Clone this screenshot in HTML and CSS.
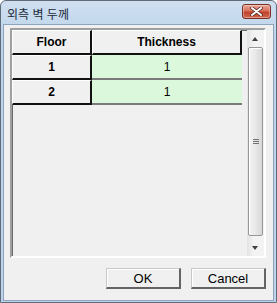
FILE: index.html
```html
<!DOCTYPE html>
<html lang="ko">
<head>
    <meta charset="UTF-8">
    <title>외측 벽 두께</title>
    <link rel="stylesheet" href="styles.css">
</head>
<body>
    <div class="window">
        <div class="titlebar">
            <span class="title">외측 벽 두께</span>
            <button class="close-btn" title="Close">
                <svg width="13" height="9" viewBox="0 0 13 9">
                    <path d="M2 1 L11 8 M11 1 L2 8" stroke="#4a2018" stroke-width="3.4" stroke-linecap="round"/>
                    <path d="M2 1 L11 8 M11 1 L2 8" stroke="#ffffff" stroke-width="2" stroke-linecap="round"/>
                </svg>
            </button>
        </div>

        <div class="client">
            <div class="grid">
                <div class="table">
                    <div class="row">
                        <div class="cell head floor">Floor</div>
                        <div class="cell head thick">Thickness</div>
                    </div>
                    <div class="row">
                        <div class="cell head floor">1</div>
                        <div class="cell value thick">1</div>
                    </div>
                    <div class="row">
                        <div class="cell head floor">2</div>
                        <div class="cell value thick">1</div>
                    </div>
                </div>

                <div class="scrollbar">
                    <div class="arrow up"></div>
                    <div class="track">
                        <div class="thumb"><span class="grip"></span></div>
                    </div>
                    <div class="arrow down"></div>
                </div>
            </div>

            <div class="buttons">
                <button class="button">OK</button>
                <button class="button">Cancel</button>
            </div>
        </div>
    </div>
</body>
</html>
```

FILE: styles.css
```css
html, body {
    margin: 0;
    padding: 0;
    background: #ffffff;
}
.window {
    width: 277px;
    height: 303px;
    box-sizing: border-box;
    border: 1px solid #5d6b7a;
    border-radius: 6px 6px 0 0;
    background: linear-gradient(#cfdff0, #bcd3ea 40px, #bcd3ea);
    display: flex;
    flex-direction: column;
    font-family: "Liberation Sans", Arial, sans-serif;
}
.titlebar {
    height: 23px;
    display: flex;
    align-items: flex-start;
    justify-content: space-between;
    padding: 0 5px 0 6px;
}
.title {
    font-family: "Noto Sans CJK KR", sans-serif;
    font-size: 12px;
    line-height: 14px;
    margin-top: 6px;
    color: #1b2a3a;
}
.close-btn {
    width: 29px;
    height: 15px;
    margin-top: 3px;
    padding: 0;
    border: 1px solid #7a2e22;
    border-radius: 3px;
    background: linear-gradient(#e9a898, #d8705c 45%, #c2412b 55%, #cd6a50);
    box-shadow: inset 0 0 0 1px rgba(255, 255, 255, 0.35);
    display: flex;
    align-items: center;
    justify-content: center;
}
.client {
    flex: 1;
    margin: 0 2px 1px 2px;
    border: 1px solid #8ea4bc;
    background: #f0f0f0;
    padding: 3px 7px 0 6px;
    display: flex;
    flex-direction: column;
}
.grid {
    height: 230px;
    box-sizing: border-box;
    border-style: solid;
    border-width: 2px;
    border-color: #a0a0a0 #ffffff #ffffff #a0a0a0;
    box-shadow: inset 1px 1px 0 #696969;
    background: #f0f0f0;
    display: flex;
}
.table {
    flex: 1;
    padding-top: 0;
}
.row {
    display: flex;
    height: 25px;
}
.cell {
    box-sizing: border-box;
    font-size: 12px;
    display: flex;
    align-items: center;
    justify-content: center;
    color: #000000;
}
.head {
    background: #f0f0f0;
    font-weight: bold;
    border-top: 1px solid #ffffff;
    border-left: 1px solid #ffffff;
    border-right: 2px solid #111111;
    border-bottom: 2px solid #111111;
}
.floor {
    width: 80px;
}
.thick {
    width: 150px;
}
.value {
    background: #dcf8dc;
    border-bottom: 2px solid #7a7a7a;
    padding-top: 1px;
}
.scrollbar {
    width: 17px;
    margin-left: 4px;
    display: flex;
    flex-direction: column;
    background: linear-gradient(90deg, #e3e3e3, #f3f3f3 40%, #f3f3f3);
}
.arrow {
    height: 17px;
    position: relative;
}
.arrow::after {
    content: "";
    position: absolute;
    left: 5px;
    border-left: 3.5px solid transparent;
    border-right: 3.5px solid transparent;
}
.arrow.up::after {
    top: 7px;
    border-bottom: 4px solid #404040;
}
.arrow.down::after {
    top: 7px;
    border-top: 4px solid #404040;
}
.track {
    flex: 1;
    padding: 0 1px;
    display: flex;
    flex-direction: column;
}
.thumb {
    margin-top: 0;
    height: 189px;
    box-sizing: border-box;
    border: 1px solid #979797;
    border-radius: 2px;
    background: linear-gradient(90deg, #f4f4f4, #e8e8e8 50%, #d8d8d8);
    box-shadow: inset 1px 1px 0 #ffffff;
    display: flex;
    align-items: center;
    justify-content: center;
}
.grip {
    width: 6px;
    height: 5px;
    background: repeating-linear-gradient(#707070 0 1px, transparent 1px 2px);
}
.buttons {
    display: flex;
    justify-content: flex-end;
    gap: 10px;
    margin-top: 10px;
}
.button {
    width: 75px;
    height: 21px;
    box-sizing: border-box;
    padding: 0;
    font-family: "Liberation Sans", Arial, sans-serif;
    font-size: 13px;
    color: #000000;
    background: #f0f0f0;
    border-style: solid;
    border-width: 1px 2px 2px 1px;
    border-color: #c8c8c8 #646464 #646464 #c8c8c8;
    box-shadow: inset 1px 1px 0 #ffffff;
}
```
